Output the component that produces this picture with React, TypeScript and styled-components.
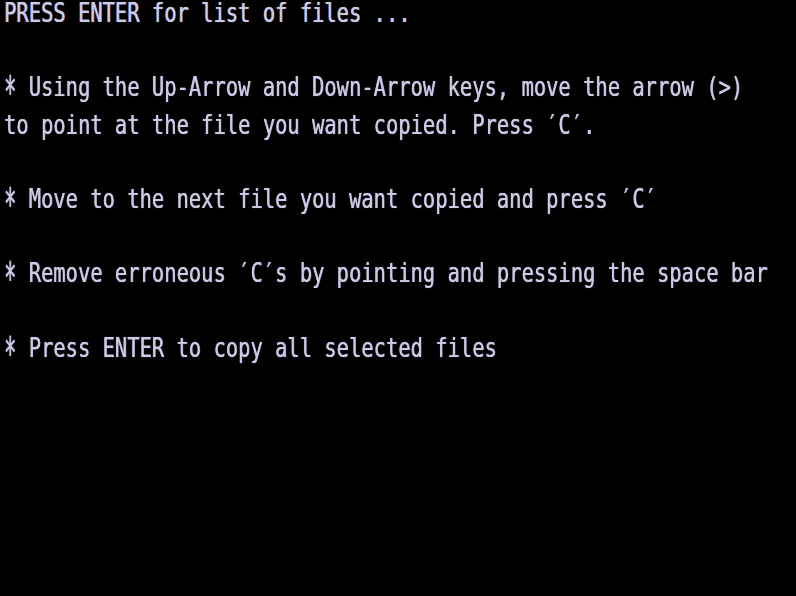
import React from "react";
import styled, { createGlobalStyle } from "styled-components";

const Global = createGlobalStyle`
  html, body { margin: 0; padding: 0; background: #000; }
  body { width: 796px; height: 596px; overflow: hidden; }
`;

const Screen = styled.div`
  width: 796px;
  height: 596px;
  background: #000;
  padding: 0 0 0 4px;
  box-sizing: border-box;
  display: flex;
  flex-direction: column;
  overflow: hidden;
`;

const Line = styled.div`
  height: 37.2px;
  flex: 0 0 37.2px;
  width: 1000px;
  font-family: "DejaVu Sans Mono", "Liberation Mono", monospace;
  font-size: 26px;
  line-height: 26px;
  color: #cbcbe8;
  white-space: pre;
  transform: scaleX(0.787);
  transform-origin: 0 0;
  text-shadow: 0 0 1px rgba(200, 200, 235, 0.8), 0.6px 0 0 rgba(200, 200, 235, 0.5);
`;

const Star = styled.span`
  display: inline-block;
  line-height: 10px;
  transform: translateY(6px) scaleY(1.7);
`;

const rows: (string | null)[] = [
  "PRESS ENTER for list of files ...",
  null,
  "* Using the Up-Arrow and Down-Arrow keys, move the arrow (>)",
  "to point at the file you want copied. Press \u2032C\u2032.",
  null,
  "* Move to the next file you want copied and press \u2032C\u2032",
  null,
  "* Remove erroneous \u2032C\u2032s by pointing and pressing the space bar",
  null,
  "* Press ENTER to copy all selected files",
];

function render(text: string) {
  if (text.startsWith("* ")) {
    return (
      <>
        <Star>*</Star>
        {text.slice(1)}
      </>
    );
  }
  return text;
}

export default function App() {
  return (
    <>
      <Global />
      <Screen>
        {rows.map((r, i) => (
          <Line key={i}>{r === null ? " " : render(r)}</Line>
        ))}
      </Screen>
    </>
  );
}
